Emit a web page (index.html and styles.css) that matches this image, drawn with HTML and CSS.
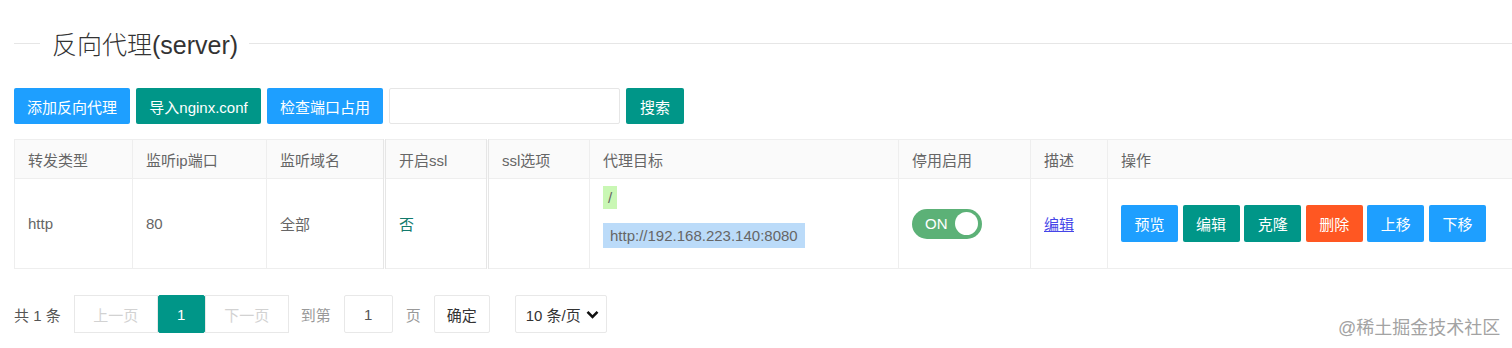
FILE: index.html
```html
<!DOCTYPE html>
<html lang="zh-CN">

<head>
    <meta charset="UTF-8">
    <meta name="viewport" content="width=device-width, initial-scale=1.0">
    <title>反向代理(server)</title>
    <link rel="stylesheet" href="styles.css">
</head>

<body>
    <div class="page">
        <div class="field-title"><span>反向代理(server)</span></div>

        <div class="toolbar">
            <button class="btn btn-blue w116">添加反向代理</button>
            <button class="btn btn-green w125">导入nginx.conf</button>
            <button class="btn btn-blue w116">检查端口占用</button>
            <input class="search-input" type="text">
            <button class="btn btn-green w58">搜索</button>
        </div>

        <table class="grid">
            <colgroup>
                <col style="width:118px">
                <col style="width:134px">
                <col style="width:118px">
                <col style="width:103px">
                <col style="width:102px">
                <col style="width:309px">
                <col style="width:132px">
                <col style="width:77px">
                <col>
            </colgroup>
            <thead>
                <tr>
                    <th>转发类型</th>
                    <th>监听ip端口</th>
                    <th>监听域名</th>
                    <th class="dbl">开启ssl</th>
                    <th class="dbl">ssl选项</th>
                    <th>代理目标</th>
                    <th>停用启用</th>
                    <th>描述</th>
                    <th>操作</th>
                </tr>
            </thead>
            <tbody>
                <tr>
                    <td>http</td>
                    <td>80</td>
                    <td>全部</td>
                    <td class="dbl"><span class="no">否</span></td>
                    <td class="dbl"></td>
                    <td class="target">
                        <div><span class="path">/</span></div>
                        <div><span class="url">http://192.168.223.140:8080</span></div>
                    </td>
                    <td>
                        <div class="switch"><em>ON</em><i></i></div>
                    </td>
                    <td><a class="desc-link" href="#">编辑</a></td>
                    <td>
                        <div class="ops">
                            <button class="btn btn-blue op">预览</button>
                            <button class="btn btn-green op">编辑</button>
                            <button class="btn btn-green op">克隆</button>
                            <button class="btn btn-red op">删除</button>
                            <button class="btn btn-blue op">上移</button>
                            <button class="btn btn-blue op">下移</button>
                        </div>
                    </td>
                </tr>
            </tbody>
        </table>

        <div class="pager">
            <span class="count">共 1 条</span>
            <div class="pages">
                <a class="disabled wide">上一页</a>
                <span class="current">1</span>
                <a class="disabled wide">下一页</a>
            </div>
            <span class="muted">到第</span>
            <input class="skip" type="text" value="1">
            <span class="muted">页</span>
            <button class="ok">确定</button>
            <div class="limit">10 条/页
                <svg width="13" height="9" viewBox="0 0 13 9"><path d="M1.5 1.8 L6.5 6.8 L11.5 1.8" fill="none" stroke="#111" stroke-width="2.6"/></svg>
            </div>
        </div>
    </div>

    <div class="watermark">@稀土掘金技术社区</div>
</body>

</html>
```

FILE: styles.css
```css
* {
    margin: 0;
    padding: 0;
    box-sizing: border-box;
    font-family: "Liberation Sans", "Noto Sans CJK SC", sans-serif;
}

body {
    width: 1512px;
    height: 348px;
    overflow: hidden;
    background: #fff;
    color: #666;
    font-size: 15px;
}

.page {
    padding-left: 14px;
}

.field-title {
    display: flex;
    align-items: center;
    height: 30px;
    margin-top: 28px;
    font-size: 25px;
    font-weight: 300;
    color: #333;
}

.field-title::before,
.field-title::after {
    content: "";
    border-top: 1px solid #e6e6e6;
}

.field-title::before {
    width: 26px;
}

.field-title::after {
    flex: 1;
}

.field-title span {
    padding: 0 11px 0 12px;
}

.toolbar {
    display: flex;
    gap: 6px;
    margin-top: 30px;
    height: 36px;
}

.btn {
    border: none;
    color: #fff;
    font-size: 15px;
    height: 36px;
    padding: 0;
    border-radius: 2px;
    cursor: pointer;
    text-align: center;
    white-space: nowrap;
}

.w116 {
    width: 116px;
}

.w125 {
    width: 125px;
}

.w58 {
    width: 58px;
}

.btn-blue {
    background: #1e9fff;
}

.btn-green {
    background: #009688;
}

.btn-red {
    background: #ff5722;
}

.search-input {
    width: 231px;
    height: 36px;
    border: 1px solid #e6e6e6;
    border-radius: 2px;
}

.grid {
    margin-top: 15px;
    width: 1510px;
    border-collapse: collapse;
    table-layout: fixed;
}

.grid th,
.grid td {
    border: 1px solid #eee;
    padding: 0 13px;
    text-align: left;
    font-weight: normal;
    vertical-align: middle;
    color: #666;
}

.grid th {
    height: 39px;
    background: #fafafa;
}

.grid td {
    height: 90px;
}

.grid .dbl {
    border-left: 3px double #e6e6e6;
}

.no {
    color: #127a6c;
}

.grid td.target {
    vertical-align: top;
    padding-top: 7px;
}

.path {
    display: inline-block;
    background: #c9f7b4;
    padding: 0 5px;
    line-height: 23px;
}

.url {
    display: inline-block;
    margin-top: 14px;
    background: #bbdbf9;
    padding: 0 7px;
    line-height: 25px;
}

.switch {
    display: flex;
    align-items: center;
    justify-content: space-between;
    width: 70px;
    height: 30px;
    border-radius: 15px;
    background: #5cb177;
    padding: 0 4px 0 13px;
}

.switch em {
    font-style: normal;
    color: #fff;
    font-size: 15px;
}

.switch i {
    width: 23px;
    height: 23px;
    border-radius: 50%;
    background: #fff;
}

.desc-link {
    color: #4545e8;
    text-decoration: underline;
}

.ops {
    display: flex;
    gap: 4.6px;
}

.op {
    width: 57px;
    height: 37px;
}

.pager {
    display: flex;
    align-items: center;
    margin-top: 26px;
    height: 38px;
    font-size: 15px;
}

.count {
    color: #555;
    margin-right: 13px;
}

.pages {
    display: flex;
    height: 38px;
    margin-right: 12px;
}

.pages a,
.pages span {
    display: flex;
    align-items: center;
    justify-content: center;
    height: 38px;
    border: 1px solid #e8e8e8;
}

.pages .wide {
    width: 84px;
    color: #d2d2d2;
}

.pages .current {
    width: 47px;
    background: #009688;
    border-color: #009688;
    border-radius: 2px;
    color: #fff;
}

.muted {
    color: #999;
}

.skip {
    width: 49px;
    height: 38px;
    margin: 0 13px;
    border: 1px solid #e8e8e8;
    border-radius: 2px;
    text-align: center;
    font-size: 15px;
    color: #555;
}

.ok {
    width: 56px;
    height: 38px;
    margin-left: 13px;
    border: 1px solid #e8e8e8;
    border-radius: 2px;
    background: #fff;
    color: #333;
    font-size: 15px;
}

.limit {
    display: flex;
    align-items: center;
    justify-content: space-between;
    width: 92px;
    height: 38px;
    margin-left: 25px;
    padding: 0 7px 0 10px;
    border: 1px solid #e8e8e8;
    border-radius: 2px;
    color: #333;
}

.watermark {
    position: absolute;
    left: 1338px;
    top: 313px;
    font-size: 18px;
    color: #a3a3a3;
}
```
